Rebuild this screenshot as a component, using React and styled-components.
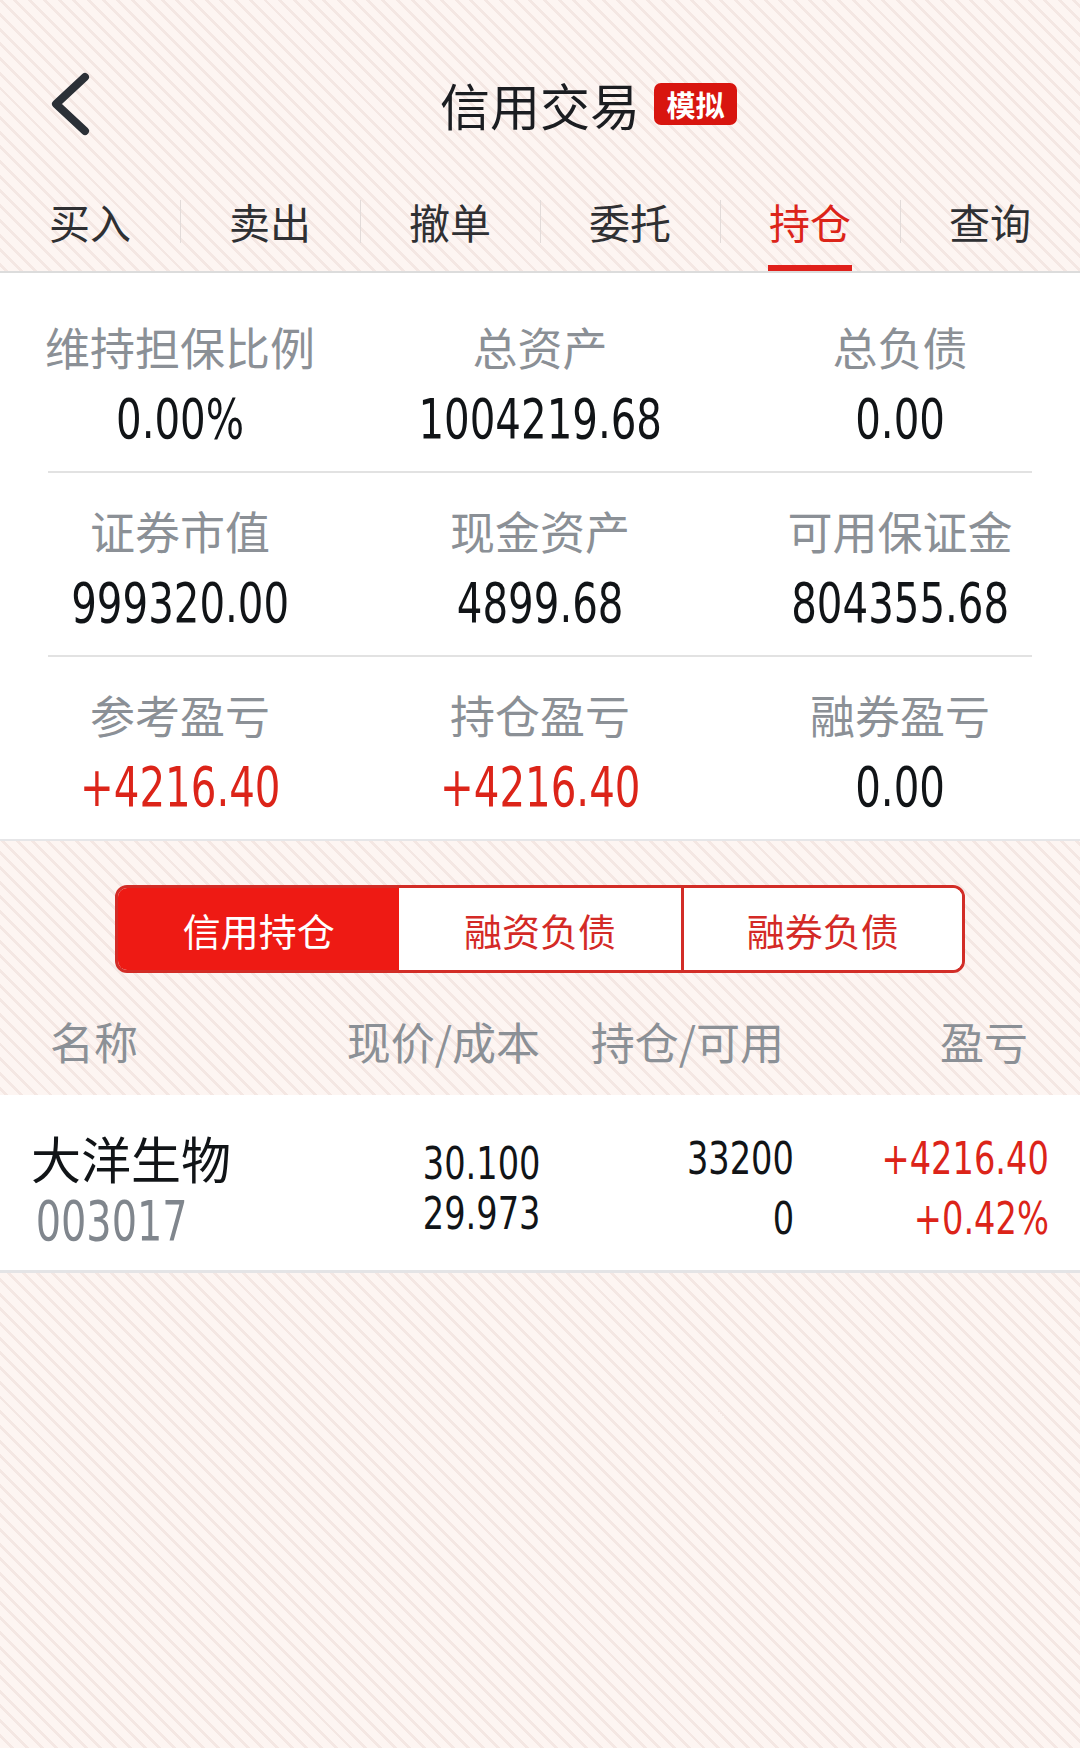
import React, { useState } from 'react'
import styled, { createGlobalStyle } from 'styled-components'

const CJK = `"Noto Sans CJK SC", "Noto Sans", sans-serif`
const NUM = `"DejaVu Sans Condensed", Roboto, "Noto Sans CJK SC", sans-serif`
const RED = '#dc2419'

const GlobalStyle = createGlobalStyle`
    body {
        margin: 0;
        font-family: ${CJK};
        background-color: #fdf5f2;
        background-image: repeating-linear-gradient(
            45deg,
            #fdf5f2 0px,
            #fdf5f2 7.6px,
            #f4e7e3 7.6px,
            #f4e7e3 10.4px
        );
    }
`;

const Page = styled.div`
    width: 1080px;
    min-height: 1748px;
`;

const TopBar = styled.div`
    display: grid;
    grid-template-columns: 160px 1fr 160px;
    align-items: center;
    height: 200px;
    padding-top: 8px;
    box-sizing: border-box;
`;

const BackButton = styled.div`
    padding-left: 50px;
    display: flex;
    align-items: center;
`;

const TitleWrap = styled.div`
    justify-self: center;
    position: relative;
    font-size: 50px;
    line-height: 64px;
    color: #1b1d21;
`;

const Badge = styled.span`
    position: absolute;
    left: calc(100% + 14px);
    top: 50%;
    transform: translateY(-50%);
    width: 83px;
    height: 42px;
    border-radius: 7px;
    background: #d8150f;
    color: #fff;
    font-size: 29px;
    font-weight: 700;
    line-height: 42px;
    text-align: center;
`;

const Tabs = styled.ul`
    display: flex;
    margin: 0;
    padding: 0;
    list-style: none;
    border-bottom: 2px solid #dcdcdc;
`;

const Tab = styled.li`
    flex: 1;
    display: flex;
    flex-direction: column;
    align-items: center;
    height: 71px;
    position: relative;
    color: ${p => (p.$active ? RED : '#2f3033')};
    &::before {
        content: '';
        display: ${p => (p.$first ? 'none' : 'block')};
        position: absolute;
        left: 0;
        top: 0;
        height: 43px;
        width: 1px;
        background: #e2dbd9;
    }
`;

const TabLabel = styled.span`
    font-size: 41px;
    line-height: 43px;
    height: 43px;
`;

const Underline = styled.span`
    margin-top: 22px;
    width: 84px;
    height: 6px;
    background: ${p => (p.$active ? '#e0201b' : 'transparent')};
`;

const Panel = styled.section`
    background: #fff;
    border-bottom: 2px solid #e6e6e8;
`;

const StatRow = styled.div`
    display: grid;
    grid-template-columns: repeat(3, 1fr);
    padding: ${p => (p.$first ? '44px' : '28px')} 0 22px;
`;

const Stat = styled.div`
    display: flex;
    flex-direction: column;
    align-items: center;
    gap: 12px;
`;

const StatLabel = styled.span`
    font-size: 45px;
    line-height: 60px;
    color: #8b9096;
`;

// condensed digits, like the DIN face of the original
const Num = styled.span`
    display: inline-block;
    font-family: ${NUM};
    white-space: nowrap;
    transform: scaleX(${p => p.$sx || 0.8});
    transform-origin: ${p => p.$origin || 'center'};
`;

const StatValue = styled(Num)`
    font-size: 56px;
    line-height: 60px;
    color: ${p => (p.$red ? RED : '#111417')};
`;

const Divider = styled.div`
    height: 2px;
    margin: 0 48px;
    background: #e2e2e2;
`;

const Segmented = styled.div`
    display: grid;
    grid-template-columns: repeat(3, 1fr);
    width: 850px;
    height: 88px;
    margin: 44px auto 0;
    box-sizing: border-box;
    border: 3px solid #d22d27;
    border-radius: 12px;
    overflow: hidden;
    background: #fff;
`;

const Segment = styled.div`
    display: flex;
    align-items: center;
    justify-content: center;
    font-size: 38px;
    background: ${p => (p.$active ? '#ee1a14' : '#fff')};
    color: ${p => (p.$active ? '#fff' : '#d42a26')};
    border-left: ${p => (p.$divider ? '3px solid #d22d27' : 'none')};
`;

const ListHead = styled.div`
    display: grid;
    grid-template-columns: 290px 200px 244px 1fr;
    align-items: center;
    height: 122px;
    padding: 14px 52px 0 50px;
    box-sizing: border-box;
    font-size: 44px;
    color: #8b9096;
`;

const HeadCell = styled.span`
    text-align: ${p => p.$align || 'right'};
    white-space: nowrap;
`;

const Row = styled.div`
    display: grid;
    grid-template-columns: 309px 200px 254px 1fr;
    align-items: center;
    padding: 30px 31px 17px;
    background: #fff;
    border-bottom: 3px solid #e4e4e6;
`;

const Cell = styled.div`
    display: flex;
    flex-direction: column;
    align-items: ${p => (p.$left ? 'flex-start' : 'flex-end')};
    font-size: 44px;
    line-height: ${p => p.$lh || 60}px;
    color: ${p => (p.$red ? RED : '#111417')};
`;

const StockName = styled.span`
    font-family: ${CJK};
    font-size: 50px;
    line-height: 64px;
    color: #111417;
`;

const StockCode = styled(Num)`
    font-size: 56px;
    line-height: 64px;
    color: #80868d;
    padding-left: 6px;
`;

const tabs = ['买入', '卖出', '撤单', '委托', '持仓', '查询']

const stats = [
    [
        { label: '维持担保比例', value: '0.00%' },
        { label: '总资产', value: '1004219.68' },
        { label: '总负债', value: '0.00' },
    ],
    [
        { label: '证券市值', value: '999320.00' },
        { label: '现金资产', value: '4899.68' },
        { label: '可用保证金', value: '804355.68' },
    ],
    [
        { label: '参考盈亏', value: '+4216.40', red: true },
        { label: '持仓盈亏', value: '+4216.40', red: true },
        { label: '融券盈亏', value: '0.00' },
    ],
]

const segments = ['信用持仓', '融资负债', '融券负债']

const BackIcon = () => (
    <svg width="44" height="66" viewBox="0 0 44 66" fill="none">
        <polyline
            points="35,6 6,33 35,60"
            stroke="#2b3037"
            strokeWidth="8"
            strokeLinecap="round"
            strokeLinejoin="round"
        />
    </svg>
)

const App = () => {
    const [ tab, setTab ] = useState(4)
    const [ seg, setSeg ] = useState(0)

    return (
        <Page>
            <GlobalStyle />
            <TopBar>
                <BackButton><BackIcon /></BackButton>
                <TitleWrap>
                    信用交易
                    <Badge>模拟</Badge>
                </TitleWrap>
            </TopBar>
            <Tabs>
                {tabs.map((t, i) => (
                    <Tab key={t} $first={i === 0} $active={i === tab} onClick={() => setTab(i)}>
                        <TabLabel>{t}</TabLabel>
                        <Underline $active={i === tab} />
                    </Tab>
                ))}
            </Tabs>
            <Panel>
                {stats.map((row, r) => (
                    <React.Fragment key={r}>
                        {r > 0 && <Divider />}
                        <StatRow $first={r === 0}>
                            {row.map(s => (
                                <Stat key={s.label}>
                                    <StatLabel>{s.label}</StatLabel>
                                    <StatValue $red={s.red}>{s.value}</StatValue>
                                </Stat>
                            ))}
                        </StatRow>
                    </React.Fragment>
                ))}
            </Panel>
            <Segmented>
                {segments.map((s, i) => (
                    <Segment key={s} $active={i === seg} $divider={i === 2} onClick={() => setSeg(i)}>
                        {s}
                    </Segment>
                ))}
            </Segmented>
            <ListHead>
                <HeadCell $align="left">名称</HeadCell>
                <HeadCell>现价/成本</HeadCell>
                <HeadCell>持仓/可用</HeadCell>
                <HeadCell>盈亏</HeadCell>
            </ListHead>
            <Row>
                <Cell $left>
                    <StockName>大洋生物</StockName>
                    <StockCode $origin="left" $sx={0.79}>003017</StockCode>
                </Cell>
                <Cell $lh={50}>
                    <Num $origin="right" $sx={0.85}>30.100</Num>
                    <Num $origin="right" $sx={0.85}>29.973</Num>
                </Cell>
                <Cell>
                    <Num $origin="right" $sx={0.85}>33200</Num>
                    <Num $origin="right" $sx={0.85}>0</Num>
                </Cell>
                <Cell $red>
                    <Num $origin="right" $sx={0.85}>+4216.40</Num>
                    <Num $origin="right" $sx={0.85}>+0.42%</Num>
                </Cell>
            </Row>
        </Page>
    )
}

export default App
